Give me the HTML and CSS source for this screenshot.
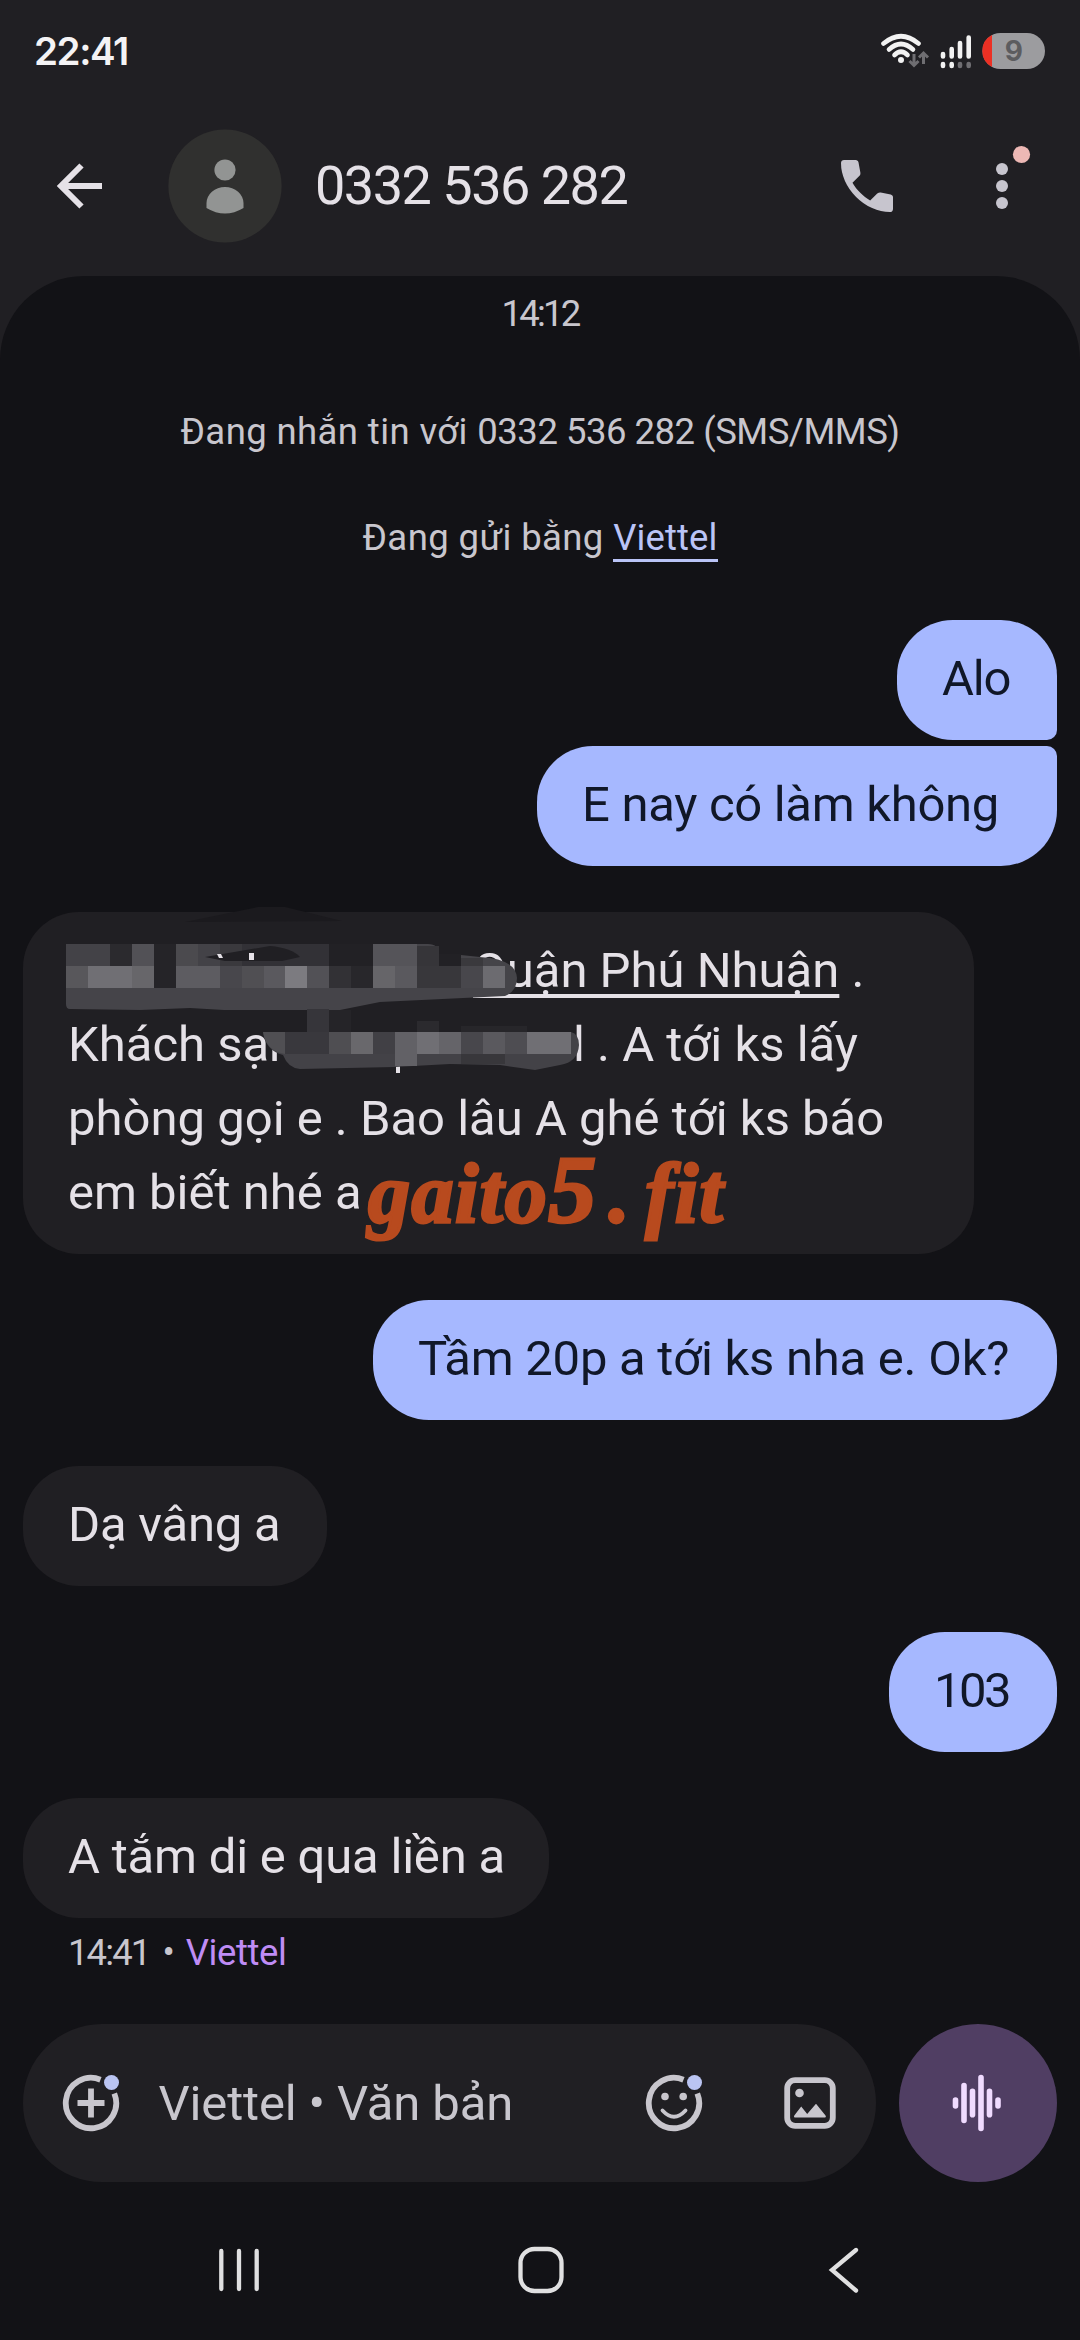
FILE: index.html
```html
<!DOCTYPE html>
<html lang="vi">
<head>
<meta charset="utf-8">
<title>0332 536 282</title>
<link rel="stylesheet" href="styles.css">
</head>
<body>
<div class="status">
  <span class="clock">22:41</span>
  <svg class="status-icons" width="170" height="44" viewBox="878 29 170 44" fill="none">
    <g stroke="#f2f2f2" stroke-width="4.6" stroke-linecap="round">
      <path d="M883.5 43.5Q901 29 918.5 43.5"/>
      <path d="M889 49.5Q901 38.5 913 49.5"/>
      <path d="M894.5 55Q901 48.5 907.5 55"/>
    </g>
    <circle cx="901" cy="60" r="3" fill="#f2f2f2"/>
    <path d="M914 54v11.5M909.5 61l4.5 4.5 4.5-4.5M923.5 64V53M919 57.5l4.5-4.5 4.5 4.5" stroke="#6f6e72" stroke-width="3"/>
    <g stroke="#f2f2f2" stroke-width="4.6" stroke-linecap="round">
      <path d="M943 54v2.500M951.700 49v7.500M960 43v13.500M968.700 37.500v19"/>
      <path d="M943 64v2M951.700 64v2"/>
      <path d="M960 64v2M968.700 64v2" stroke="#6f6e72"/>
    </g>
    <rect x="982.500" y="33" width="62.500" height="36" rx="18" fill="#9c9c9f"/>
    <path d="M992 35A18 18 0 0 0 992 67Z" fill="#ec3024"/>
    <text class="level" x="1013.800" y="61" text-anchor="middle">9</text>
  </svg>
</div>
<header class="appbar">
  <svg class="back" width="48" height="48" viewBox="55 162 48 48" fill="none" stroke="#e5e1e7" stroke-width="6">
    <path d="M102 186H60M81.500 165.500L61 186l20.500 20.500"/>
  </svg>
  <svg class="avatar" width="114" height="114" viewBox="0 0 114 114">
    <circle cx="57" cy="57" r="56.600" fill="#30302f"/>
    <g fill="#929493"><circle cx="57" cy="41" r="10.600"/><path d="M38.500 79V74a18.500 16 0 0 1 37 0v5q-18.500 11-37 0Z"/></g>
  </svg>
  <h1 class="title">0332 536 282</h1>
  <svg class="call" width="52" height="52" viewBox="3 3 18 18" fill="#c7c5ce">
    <path d="M19.950 21q-3.130 0-6.180-1.360t-5.540-3.860-3.860-5.550T3 4.050Q3 3.600 3.300 3.300T4.050 3H8.100q.35 0 .63.240.27.240.32.560l.65 3.500q.05.400-.03.680-.07.270-.27.470L6.980 10.900q.5.920 1.190 1.790.68.860 1.500 1.660.78.780 1.630 1.440t1.800 1.210l2.350-2.350q.22-.22.590-.34.360-.11.710-.06l3.450.7q.35.100.57.360.23.260.23.590v4.050q0 .45-.3.750t-.75.300Z"/>
  </svg>
  <svg class="more" width="42" height="70" viewBox="990 144 42 70">
    <g fill="#c7c5ce"><circle cx="1002" cy="169" r="6"/><circle cx="1002" cy="186" r="6"/><circle cx="1002" cy="203" r="6"/></g>
    <circle cx="1021.500" cy="154.500" r="8.600" fill="#edb8b5"/>
  </svg>
</header>
<main class="chat">
  <p class="note time">14:12</p>
  <p class="note">Đang nhắn tin với <span class="number">0332 536 282 (SMS/MMS)</span></p>
  <p class="note carrier-note">Đang gửi bằng <a class="carrier-link">Viettel</a></p>
  <div class="thread">
    <div class="bubble sent first">Alo</div>
    <div class="bubble sent last">E nay có làm không</div>
    <div class="bubble received address">
      <div class="line"><span class="gap-address"></span><u>Quận Phú Nhuận</u> .</div>
      <div class="line"><span class="hotel">Khách sạn</span>l . A tới ks lấy</div>
      <div class="line">phòng gọi e . Bao lâu A ghé tới ks báo</div>
      <div class="line">em biết nhé a</div>
      <svg class="mosaic" width="580" height="176" viewBox="0 904 580 176">
        <path d="M185 922L258 907 285 907 342 921Z" fill="#1b1a1e"/>
        <path d="M66 944H428Q439 944 439 955H461L480 957Q516 959 517 978 517 991 505 996L380 1002 340 1010H224L190 1008 140 1010 70 1009Q66 1009 66 1004Z" fill="#454449"/>
        <g shape-rendering="crispEdges">
          <path d="M66 944h44v22H66Z" fill="#434247"/><path d="M110 944h22v22h-22Z" fill="#2b2a2e"/><path d="M132 944h22v22h-22Z" fill="#525156"/><path d="M154 944h22v44h-22Z" fill="#252428"/><path d="M176 944h22v22h-22Z" fill="#4b4a4e"/><path d="M198 944h22v22h-22Z" fill="#434247"/><path d="M220 944h22v22h-22Z" fill="#3a393d"/><path d="M242 944h87v22h-87Z" fill="#323136"/><path d="M329 944h44v22h-44Z" fill="#222125"/><path d="M373 944h44v22h-44Z" fill="#555459"/><path d="M417 946h22v20h-22Z" fill="#363539"/><path d="M439 954h22v12h-22Z" fill="#222125"/><path d="M461 958h22v8h-22Z" fill="#3a393d"/>
          <path d="M66 966h22v22H66Z" fill="#58575b"/><path d="M88 966h44v22H88Z" fill="#706f74"/><path d="M132 966h22v22h-22Z" fill="#67666a"/><path d="M176 966h44v22h-44Z" fill="#5d5c61"/><path d="M220 966h22v22h-22Z" fill="#48474c"/><path d="M242 966h22v22h-22Z" fill="#504f53"/><path d="M264 966h21v22h-21Z" fill="#5a595e"/><path d="M285 966h22v22h-22Z" fill="#7c7b80"/><path d="M307 966h22v22h-22Z" fill="#525156"/><path d="M329 966h22v22h-22Z" fill="#323135"/><path d="M351 966h22v22h-22Z" fill="#28272b"/><path d="M373 966h22v22h-22Z" fill="#666569"/><path d="M395 966h22v22h-22Z" fill="#5a595e"/><path d="M417 966h44v22h-44Z" fill="#38373b"/><path d="M461 966h22v22h-22Z" fill="#48474c"/><path d="M483 966h22v22h-22Z" fill="#6c6b70"/>
        </g>
        <path d="M205 957L270 946Q292 948 300 957L282 961H225Z" fill="#201f23"/>
        <path d="M217 954l4 0 2 4h-4ZM249 953h5v7h-5ZM396 1066h4v7h-4Z" fill="#e5e1e7"/>
        <path d="M307 1009h22v25h-22Z" fill="#36353a"/><path d="M329 1010h22v22h-22Z" fill="#252428"/><path d="M417 1021h22v12h-22Z" fill="#2b2a2e"/><path d="M461 1026h66v6h-66Z" fill="#27262a"/>
        <path d="M263 1032H571Q579 1034 579 1045 578 1062 560 1065L535 1070 500 1065 450 1064 395 1067 300 1069Q288 1068 283 1055 266 1051 263 1032Z" fill="#434247"/>
        <path d="M263 1032h22v22Q266 1051 263 1032Z" fill="#504f53"/>
        <g shape-rendering="crispEdges">
          <path d="M285 1032h44v22h-44Z" fill="#39383d"/><path d="M329 1032h22v22h-22Z" fill="#4f4e52"/><path d="M351 1032h22v22h-22Z" fill="#69686c"/><path d="M373 1032h22v22h-22Z" fill="#414045"/><path d="M395 1032h22v34h-22Z" fill="#626166"/><path d="M417 1032h22v22h-22Z" fill="#706f74"/><path d="M439 1032h22v22h-22Z" fill="#656469"/><path d="M461 1032h22v22h-22Z" fill="#48474c"/><path d="M483 1032h22v22h-22Z" fill="#5a595e"/><path d="M505 1032h22v22h-22Z" fill="#4e4d52"/><path d="M527 1032h44v22h-44Z" fill="#706f74"/><path d="M461 1054h44v10h-44Z" fill="#38373b"/>
        </g>
      </svg>
      <span class="watermark">gaito<span class="five">5</span><span class="dot">.</span>fit</span>
    </div>
    <div class="bubble sent ask">Tầm 20p a tới ks nha e. Ok?</div>
    <div class="bubble received yes">Dạ vâng a</div>
    <div class="bubble sent room">103</div>
    <div class="bubble received shower">A tắm di e qua liền a</div>
    <div class="meta"><span class="at">14:41</span><span class="bullet">•</span><span class="carrier">Viettel</span></div>
  </div>
</main>
<footer class="compose">
  <div class="field">
    <svg width="60" height="60" viewBox="-30 -30 60 60" fill="none">
      <g stroke="#c8c6cd" stroke-width="5.800"><path d="M9.500 -23.300A25.200 25.200 0 1 0 23.300 -9.500"/><path d="M-13.500 0h27M0 -14.500v29"/></g>
      <circle cx="20.500" cy="-20.500" r="7.500" fill="#bac4f2"/>
    </svg>
    <span class="placeholder">Viettel • Văn bản</span>
    <svg width="60" height="60" viewBox="-30 -30 60 60" fill="none">
      <g stroke="#c8c6cd" stroke-width="5.800"><path d="M9.500 -23.300A25.200 25.200 0 1 0 23.300 -9.500"/><path d="M-11.500 7.500Q0 20 11.500 7.500" stroke-width="3.800" stroke-linecap="round"/></g>
      <g fill="#c8c6cd"><circle cx="-9" cy="-6.500" r="3.800"/><circle cx="9.200" cy="-6.500" r="3.800"/></g>
      <circle cx="20.500" cy="-20.500" r="7.500" fill="#bac4f2"/>
    </svg>
    <svg class="gallery" width="52" height="52" viewBox="-26 -26 52 52" fill="#c8c6cd">
      <rect x="-22.800" y="-22.800" width="45.600" height="45.600" rx="8" fill="none" stroke="#c8c6cd" stroke-width="5.800"/>
      <circle cx="-10.500" cy="-10" r="4.300"/>
      <path d="M-15.500 14.500q-1-1-.2-2L-8.800 3.500l6 7.500L6 .8 15.500 12.500q1 1-.2 2Z"/>
    </svg>
  </div>
  <button class="voice" aria-label="Ghi âm">
    <svg width="60" height="60" viewBox="-30 -30 60 60" stroke="#f0dbff" stroke-width="5.600" stroke-linecap="round">
      <path d="M-22.500 -3v6M-14 -17.500v35M-5.500 -11.800v23.600M3 -25.500v51M11.500 -11.800v23.600M20 -3v6"/>
    </svg>
  </button>
</footer>
<nav class="nav">
  <svg width="1080" height="60" viewBox="0 2240 1080 60" fill="none" stroke="#e0e0e1" stroke-width="4.300" stroke-linecap="round">
    <path d="M221.300 2251v38M239 2251v38M256.700 2251v38"/>
    <rect x="520.500" y="2249" width="41" height="42" rx="14"/>
    <path d="M856 2250L832 2270l24 20.500"/>
  </svg>
</nav>
</body>
</html>
```
FILE: styles.css
```css
* { box-sizing: border-box; }
body {
  margin: 0;
  width: 1080px;
  height: 2340px;
  overflow: hidden;
  display: flex;
  flex-direction: column;
  background: #201f23;
  color: #e5e1e7;
  font-family: Roboto, "Noto Sans", sans-serif;
}
svg { display: block; flex: none; }

.status {
  height: 102px;
  padding: 0 32px 0 34px;
  display: flex;
  align-items: center;
  justify-content: space-between;
}
.clock { font: 600 38.5px Inter, sans-serif; letter-spacing: -1.4px; color: #f4f3f5; }
.level { font: 700 28px Inter, sans-serif; fill: #5c5c5f; }

.appbar {
  height: 174px;
  padding: 0 48px 6px 55px;
  display: flex;
  align-items: center;
}
.avatar { margin-left: 65px; }
.title { margin: 0 auto 0 33px; font-weight: 400; font-size: 54px; letter-spacing: -1.5px; line-height: 64px; }
.more { margin-left: 97px; margin-top: -14px; }

.chat {
  height: 1748px;
  padding: 11px 23px 0;
  border-radius: 84px 84px 0 0;
  background: #121216;
}
.note {
  margin: 0 0 62px;
  font-size: 36.5px;
  line-height: 44px;
  letter-spacing: .4px;
  text-align: center;
  color: #c8c6cd;
}
.note.time { margin: 5px 0 74px; letter-spacing: -2.8px; }
.carrier-note { margin-bottom: 60px; }
.number { letter-spacing: -.5px; }
.carrier-link { letter-spacing: .1px; color: #bac4f7; border-bottom: 3px solid #bac4f7; }

.thread { display: flex; flex-direction: column; align-items: flex-start; }
.bubble {
  position: relative;
  padding: 22px 0 24px 45px;
  border-radius: 56px;
  font-size: 49px;
  line-height: 74px;
  margin-bottom: 46px;
  white-space: pre;
}
.sent { align-self: flex-end; background: #a6b8ff; color: #101728; }
.received { background: #201f23; }
.first { width: 160px; letter-spacing: -1.2px; margin-bottom: 6px; border-bottom-right-radius: 10px; }
.last { width: 520px; letter-spacing: -.3px; border-top-right-radius: 10px; }
.address { width: 951px; height: 342px; white-space: normal; }
.ask { width: 684px; letter-spacing: -.25px; }
.yes { width: 304px; letter-spacing: -.2px; }
.room { width: 168px; letter-spacing: -2.5px; }
.shower { width: 526px; letter-spacing: -.2px; }
.line { height: 74px; white-space: pre; }
.line u { text-decoration-thickness: 3.5px; text-underline-offset: 7px; text-decoration-skip-ink: none; }
.gap-address { display: inline-block; width: 405px; }
.hotel { display: inline-block; width: 505px; }
.mosaic { position: absolute; left: -23px; top: -8px; }
.watermark {
  position: absolute;
  left: 345px;
  top: 232px;
  font: italic 700 84px/100px "Liberation Serif", serif;
  letter-spacing: 1.5px;
  color: #b84a1e;
  -webkit-text-stroke: 3px #b84a1e;
}
.five { font-size: 96px; line-height: 1px; }
.dot { margin: 0 14px 0 11px; }
.meta {
  margin: -33px 0 0 45px;
  display: flex;
  font-size: 36.5px;
  line-height: 44px;
  color: #c8c6cd;
}
.at { letter-spacing: -1.9px; }
.bullet { margin: 0 11px 0 13px; }
.carrier { letter-spacing: -.4px; color: #bf8cf5; }

.compose {
  height: 158px;
  padding: 0 23px;
  display: flex;
  gap: 23px;
  background: #121216;
}
.field {
  width: 853px;
  border-radius: 79px;
  background: #201f23;
  display: flex;
  align-items: center;
  padding: 0 40px 0 37.5px;
}
.placeholder { margin: 0 auto 0 38px; font-size: 49px; letter-spacing: -.15px; color: #c8c6cd; }
.gallery { margin-left: 80px; }
.voice {
  width: 158px;
  height: 158px;
  padding: 0;
  border: 0;
  border-radius: 50%;
  display: grid;
  place-items: center;
  background: #503e63;
}
.nav { flex: 1; padding-top: 58px; background: #121216; }
```
